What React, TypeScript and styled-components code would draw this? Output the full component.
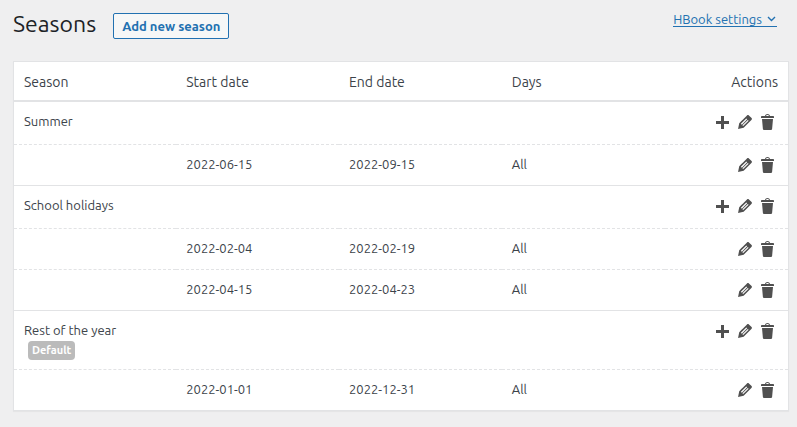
import React from "react";
import styled, { createGlobalStyle } from "styled-components";

const GlobalStyle = createGlobalStyle`
  * { box-sizing: border-box; }
  body {
    margin: 0;
    background: #efeff0;
    color: #3c434a;
    font-family: Ubuntu, "Noto Sans", sans-serif;
    font-size: 13px;
    line-height: 18px;
  }
`;

const Page = styled.main`
  padding: 8px 8px 16px 13px;
`;

const Header = styled.header`
  display: flex;
  align-items: flex-start;
  justify-content: space-between;
  margin-bottom: 21px;
`;

const TitleGroup = styled.div`
  display: flex;
  align-items: center;
  gap: 17px;
`;

const Title = styled.h1`
  margin: 0;
  color: #1d2327;
  font-size: 23px;
  font-weight: 400;
  line-height: 32px;
`;

const AddButton = styled.button`
  height: 26px;
  margin-top: 4px;
  padding: 0 8px;
  border: 1px solid #2271b1;
  border-radius: 2px;
  background: #f6f7f7;
  color: #2271b1;
  font: 600 13px/20px Ubuntu, "Noto Sans", sans-serif;
  white-space: nowrap;
  cursor: pointer;
`;

const SettingsLink = styled.a`
  display: flex;
  align-items: center;
  gap: 4px;
  margin: 4px 12px 0 0;
  border-bottom: 1px solid #2271b1;
  color: #2271b1;
  line-height: 14px;
  text-decoration: none;
`;

const Table = styled.table`
  width: 100%;
  table-layout: fixed;
  border: 1px solid #e2e3e5;
  border-collapse: collapse;
  background: #fff;
  box-shadow: 0 1px 1px rgba(0, 0, 0, 0.04);
`;

const HeadCell = styled.th<{ $end?: boolean }>`
  width: ${(p) => (p.$end ? "auto" : "21%")};
  height: 39px;
  padding: 2px 10px 0;
  border-bottom: 2px solid #e2e3e5;
  font-size: 14px;
  font-weight: 400;
  text-align: ${(p) => (p.$end ? "right" : "left")};
`;

type Line = "dashed" | "solid" | "none";

const Row = styled.tr<{ $line: Line }>`
  border-bottom: ${(p) => (p.$line === "none" ? "0" : `1px ${p.$line} #e2e3e5`)};
`;

const Cell = styled.td`
  padding: 10px;
  vertical-align: top;
`;

const SeasonActions = styled.td`
  padding: 10px 10px 12px;
  vertical-align: top;
`;

const Actions = styled.div`
  display: flex;
  justify-content: flex-end;
  gap: 3px;
`;

const IconButton = styled.button`
  width: 20px;
  height: 20px;
  padding: 0;
  border: 0;
  background: none;
  cursor: pointer;

  svg {
    display: block;
    fill: #505050;
  }
`;

const Badge = styled.span`
  display: block;
  width: fit-content;
  margin: 2px 0 -1px 4px;
  padding: 0 4px;
  border-radius: 4px;
  background: #bbb;
  color: #fff;
  font-size: 11px;
  font-weight: 700;
  line-height: 19px;
`;

const icons = {
  Add: "M17 9v3h-5v5H9v-5H4V9h5V4h3v5h5z",
  Edit: "M13.89 3.39l2.71 2.72c.46.46.42 1.24.03 1.64l-8.01 8.02-5.56 1.16 1.16-5.58s7.6-7.63 7.99-8.03c.39-.39 1.22-.39 1.68.07zM11.3 6.4l-5.4 5.4.9.9 5.4-5.4zM12.8 7.9l-5.4 5.4.8.8 5.4-5.4z",
  Delete:
    "M12 4h3c.6 0 1 .4 1 1v1H3V5c0-.6.5-1 1-1h3c.2-1.1 1.3-2 2.5-2s2.3.9 2.5 2zM8 4h3c-.2-.6-.9-1-1.5-1S8.2 3.4 8 4zM4 7h11l-.9 10.1c0 .5-.5.9-1 .9H5.9c-.5 0-.9-.4-1-.9L4 7z",
};

function Action({ name, subject }: { name: keyof typeof icons; subject: string }) {
  return (
    <IconButton type="button" aria-label={`${name} ${subject}`}>
      <svg width="20" height="20" viewBox="0 0 20 20" fillRule="evenodd" aria-hidden="true">
        <path d={icons[name]} />
      </svg>
    </IconButton>
  );
}

const seasons = [
  { name: "Summer", dates: [["2022-06-15", "2022-09-15"]] },
  {
    name: "School holidays",
    dates: [
      ["2022-02-04", "2022-02-19"],
      ["2022-04-15", "2022-04-23"],
    ],
  },
  { name: "Rest of the year", isDefault: true, dates: [["2022-01-01", "2022-12-31"]] },
];

export default function App() {
  return (
    <>
      <GlobalStyle />
      <Page>
        <Header>
          <TitleGroup>
            <Title>Seasons</Title>
            <AddButton type="button">Add new season</AddButton>
          </TitleGroup>
          <SettingsLink href="#settings">
            HBook settings
            <svg width="11" height="8" viewBox="0 0 11 8" fill="none" stroke="currentColor" strokeWidth="1.4" aria-hidden="true">
              <path d="M2 2l3.5 3.5L9 2" />
            </svg>
          </SettingsLink>
        </Header>
        <Table>
          <thead>
            <tr>
              <HeadCell scope="col">Season</HeadCell>
              <HeadCell scope="col">Start date</HeadCell>
              <HeadCell scope="col">End date</HeadCell>
              <HeadCell scope="col">Days</HeadCell>
              <HeadCell scope="col" $end>Actions</HeadCell>
            </tr>
          </thead>
          {seasons.map((season, s) => (
            <tbody key={season.name}>
              <Row $line="dashed">
                <Cell>
                  {season.name}
                  {season.isDefault && <Badge>Default</Badge>}
                </Cell>
                <Cell />
                <Cell />
                <Cell />
                <SeasonActions>
                  <Actions>
                    <Action name="Add" subject={`dates to ${season.name}`} />
                    <Action name="Edit" subject={season.name} />
                    <Action name="Delete" subject={season.name} />
                  </Actions>
                </SeasonActions>
              </Row>
              {season.dates.map(([start, end], d) => {
                const last = d === season.dates.length - 1;
                const line: Line = !last ? "dashed" : s === seasons.length - 1 ? "none" : "solid";
                return (
                  <Row key={start} $line={line}>
                    <Cell />
                    <Cell>{start}</Cell>
                    <Cell>{end}</Cell>
                    <Cell>All</Cell>
                    <Cell>
                      <Actions>
                        <Action name="Edit" subject={`${start} to ${end}`} />
                        <Action name="Delete" subject={`${start} to ${end}`} />
                      </Actions>
                    </Cell>
                  </Row>
                );
              })}
            </tbody>
          ))}
        </Table>
      </Page>
    </>
  );
}
